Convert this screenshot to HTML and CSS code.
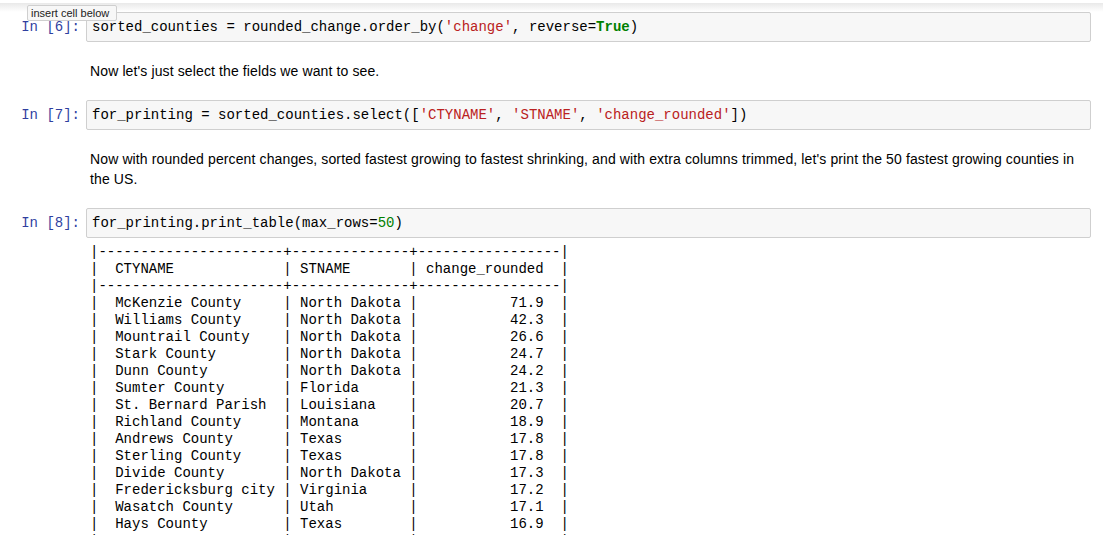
FILE: index.html
```html
<!DOCTYPE html>
<html>
<head>
<meta charset="utf-8">
<link rel="stylesheet" href="styles.css">
</head>
<body>
<div class="topbar"></div>
<div class="tooltip">insert cell below</div>
<div class="notebook">
  <div class="cell code-cell">
    <div class="input">
      <div class="prompt">In [6]:</div>
      <div class="code-box"><pre class="code">sorted_counties = rounded_change.order_by(<span class="str">'change'</span>, reverse=<span class="kw">True</span>)</pre></div>
    </div>
  </div>
  <div class="cell md-cell">
    <div class="prompt-space"></div>
    <div class="md">Now let's just select the fields we want to see.</div>
  </div>
  <div class="cell code-cell">
    <div class="input">
      <div class="prompt">In [7]:</div>
      <div class="code-box"><pre class="code">for_printing = sorted_counties.select([<span class="str">'CTYNAME'</span>, <span class="str">'STNAME'</span>, <span class="str">'change_rounded'</span>])</pre></div>
    </div>
  </div>
  <div class="cell md-cell">
    <div class="prompt-space"></div>
    <div class="md">Now with rounded percent changes, sorted fastest growing to fastest shrinking, and with extra columns trimmed, let's print the 50 fastest growing counties in the US.</div>
  </div>
  <div class="cell code-cell">
    <div class="input">
      <div class="prompt">In [8]:</div>
      <div class="code-box"><pre class="code">for_printing.print_table(max_rows=<span class="num">50</span>)</pre></div>
    </div>
    <div class="output">
      <div class="prompt-space"></div>
<pre class="out">|----------------------+--------------+-----------------|
|  CTYNAME             | STNAME       | change_rounded  |
|----------------------+--------------+-----------------|
|  McKenzie County     | North Dakota |           71.9  |
|  Williams County     | North Dakota |           42.3  |
|  Mountrail County    | North Dakota |           26.6  |
|  Stark County        | North Dakota |           24.7  |
|  Dunn County         | North Dakota |           24.2  |
|  Sumter County       | Florida      |           21.3  |
|  St. Bernard Parish  | Louisiana    |           20.7  |
|  Richland County     | Montana      |           18.9  |
|  Andrews County      | Texas        |           17.8  |
|  Sterling County     | Texas        |           17.8  |
|  Divide County       | North Dakota |           17.3  |
|  Fredericksburg city | Virginia     |           17.2  |
|  Wasatch County      | Utah         |           17.1  |
|  Hays County         | Texas        |           16.9  |
|                      |              |                 |</pre>
    </div>
  </div>
</div>
</body>
</html>
```
FILE: styles.css
```css
html, body {
  margin: 0;
  padding: 0;
  background: #fff;
  overflow: hidden;
}
body {
  position: relative;
  font-family: "Liberation Sans", Arial, sans-serif;
  color: #000;
}
.topbar {
  height: 12px;
  background: linear-gradient(to bottom, #ffffff 0, #ffffff 3px, #e9e9e9 3px, #f3f3f3 7px, #fdfdfd 11px, #ffffff 12px);
}
.tooltip {
  position: absolute;
  top: 5px;
  left: 27px;
  width: 90px;
  height: 16px;
  box-sizing: border-box;
  border: 1px solid #cfcfcf;
  border-radius: 2px;
  background: #f7f7f7;
  color: #222;
  font-family: "Liberation Sans", Arial, sans-serif;
  font-size: 11px;
  line-height: 14px;
  padding: 0 0 0 3px;
  white-space: nowrap;
  z-index: 2;
}
.notebook {
  display: flex;
  flex-direction: column;
  gap: 19px;
  padding-right: 12px;
}
.cell {
  display: flex;
}
.code-cell {
  flex-direction: column;
}
.input {
  display: flex;
}
.prompt {
  width: 86px;
  flex: 0 0 86px;
  box-sizing: border-box;
  padding: 7px 6px 0 0;
  text-align: right;
  font-family: "Liberation Mono", "Courier New", monospace;
  font-size: 14px;
  line-height: 16px;
  color: #303F9F;
  white-space: nowrap;
}
.prompt-space {
  width: 86px;
  flex: 0 0 86px;
}
.code-box {
  flex: 1;
  height: 30px;
  box-sizing: border-box;
  border: 1px solid #cfcfcf;
  border-radius: 2px;
  background: #f7f7f7;
  padding: 6px 5px;
}
.code {
  margin: 0;
  font-family: "Liberation Mono", "Courier New", monospace;
  font-size: 14px;
  line-height: 16px;
  color: #000;
}
.str { color: #BA2121; }
.kw { color: #008000; font-weight: bold; }
.num { color: #008000; }
.md {
  flex: 1;
  padding: 0 4px;
  font-size: 14px;
  line-height: 20px;
  letter-spacing: 0.12px;
}
.output {
  display: flex;
  margin-top: 6px;
}
.out {
  margin: 0;
  padding-left: 4px;
  font-family: "Liberation Mono", "Courier New", monospace;
  font-size: 14px;
  line-height: 17px;
  color: #000;
}
```
